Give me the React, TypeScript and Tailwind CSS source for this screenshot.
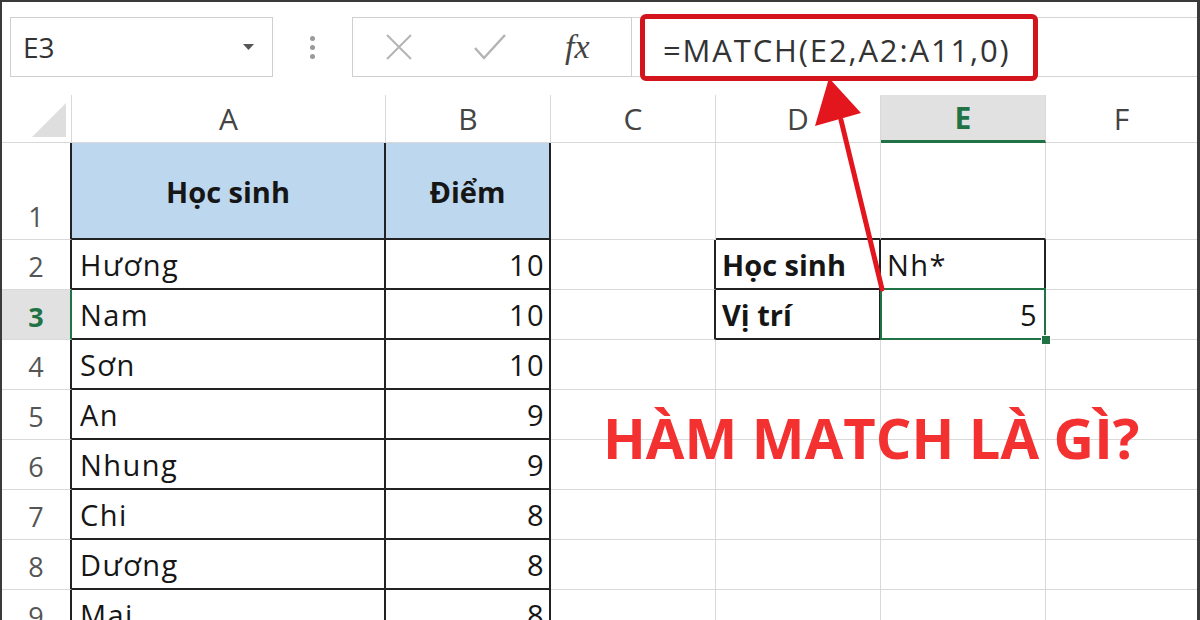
import React from "react";

type Edge = "light" | "dark" | "green" | "none";

const RIGHT: Record<Edge, string> = {
  light: "border-r border-r-[#d9d9d9]",
  dark: "border-r-2 border-r-[#222]",
  green: "border-r-2 border-r-[#217346]",
  none: "",
};
const BOTTOM: Record<Edge, string> = {
  light: "border-b border-b-[#d9d9d9]",
  dark: "border-b-2 border-b-[#222]",
  green: "border-b-[3px] border-b-[#217346]",
  none: "",
};

const FONT = "font-['Open_Sans',sans-serif]";

const names = ["Hương", "Nam", "Sơn", "An", "Nhung", "Chi", "Dương", "Mai"];
const scores = [10, 10, 10, 9, 9, 8, 8, 8];

function Cell({
  right = "light",
  bottom = "light",
  className = "",
  children,
}: {
  right?: Edge;
  bottom?: Edge;
  className?: string;
  children?: React.ReactNode;
}) {
  return (
    <div className={`relative flex ${RIGHT[right]} ${BOTTOM[bottom]} ${className}`}>
      {children}
    </div>
  );
}

function ColHead({ label, active }: { label: string; active?: boolean }) {
  return (
    <Cell
      bottom={active ? "green" : "light"}
      className={`items-center justify-center text-[30px] leading-none ${
        active ? "bg-[#e1e1e1] font-bold text-[#217346]" : "text-[#444]"
      } ${label === "F" ? "border-r-0" : ""}`}
    >
      {label}
    </Cell>
  );
}

function RowHead({ n, active }: { n: number; active?: boolean }) {
  return (
    <Cell
      right={active ? "green" : "dark"}
      className={`items-end justify-center pb-[9px] text-[27px] leading-none ${
        active ? "bg-[#e1e1e1] font-bold text-[#217346]" : "text-[#555]"
      }`}
    >
      {n}
    </Cell>
  );
}

const txt = "text-[29px] leading-none tracking-[0.05em] text-[#161616]";

export default function App() {
  return (
    <div
      className={`relative h-[620px] w-[1200px] overflow-hidden border-l-2 border-r-[3px] border-t-2 border-[#3a3a3a] bg-white ${FONT}`}
    >
      {/* Formula bar */}
      <div className="flex h-[93px] items-start pt-[15px]">
        <div className="ml-[8px] flex h-[60px] w-[263px] items-center justify-between border border-[#cfcfcf] pl-[12px] pr-[18px] text-[28px] text-[#333]">
          <span>E3</span>
          <svg width="11" height="6" viewBox="0 0 11 6">
            <path d="M0 0h11L5.5 6z" fill="#555" />
          </svg>
        </div>
        <div className="flex h-[60px] w-[79px] flex-col items-center justify-center gap-[4px]">
          <span className="h-[5px] w-[5px] rounded-full bg-[#9a9a9a]" />
          <span className="h-[5px] w-[5px] rounded-full bg-[#9a9a9a]" />
          <span className="h-[5px] w-[5px] rounded-full bg-[#9a9a9a]" />
        </div>
        <div className="flex h-[60px] w-[280px] items-center border border-[#cfcfcf]">
          <svg width="30" height="30" viewBox="0 0 30 30" className="ml-[31px]">
            <path d="M3 3l24 24M27 3L3 27" stroke="#b4b4b4" strokeWidth="2" fill="none" />
          </svg>
          <svg width="34" height="28" viewBox="0 0 34 28" className="ml-[59px]">
            <path d="M2 15l9 10L32 2" stroke="#b4b4b4" strokeWidth="2.5" fill="none" />
          </svg>
          <span className="ml-[58px] font-['Liberation_Serif',serif] text-[34px] italic leading-none text-[#444]">
            fx
          </span>
        </div>
        <div className="flex h-[60px] flex-1 border-y border-[#d4d4d4]">
          <div className="-mt-[4px] ml-[8px] flex h-[67px] w-[398px] items-center rounded-[6px] border-[5px] border-[#d4141c] pl-[18px] pt-[6px] text-[31px] leading-none tracking-[0.06em] text-[#333]">
            =MATCH(E2,A2:A11,0)
          </div>
        </div>
      </div>

      {/* Sheet */}
      <div className="grid grid-cols-[70px_314px_165px_165px_165px_165px_151px] grid-rows-[48px_97px_repeat(8,50px)]">
        <Cell bottom="light" className="items-end justify-end pb-[5px] pr-[5px]">
          <svg width="34" height="34" viewBox="0 0 34 34">
            <path d="M34 0V34H0z" fill="#dedede" />
          </svg>
        </Cell>
        {["A", "B", "C", "D", "E", "F"].map((c) => (
          <ColHead key={c} label={c} active={c === "E"} />
        ))}

        {/* Row 1 */}
        <RowHead n={1} />
        <Cell right="dark" bottom="dark" className="items-center justify-center bg-[#bdd7ee] pt-[2px]">
          <span className="text-[29px] font-bold leading-none text-[#161616]">Học sinh</span>
        </Cell>
        <Cell right="dark" bottom="dark" className="items-center justify-center bg-[#bdd7ee] pt-[2px]">
          <span className="text-[29px] font-bold leading-none text-[#161616]">Điểm</span>
        </Cell>
        <Cell />
        <Cell bottom="dark" />
        <Cell bottom="dark" />
        <Cell className="border-r-0" />

        {names.map((name, i) => {
          const row = i + 2;
          return (
            <React.Fragment key={name}>
              <RowHead n={row} active={row === 3} />
              <Cell right="dark" bottom="dark" className={`items-end pb-[9px] pl-[8px] ${txt}`}>
                {name}
              </Cell>
              <Cell right="dark" bottom="dark" className={`items-end justify-end pb-[9px] pr-[4px] ${txt}`}>
                {scores[i]}
              </Cell>
              <Cell right={row === 2 || row === 3 ? "dark" : "light"} />
              {row === 2 && (
                <>
                  <Cell right="dark" bottom="dark" className="items-end pb-[9px] pl-[6px]">
                    <span className="text-[29px] font-bold leading-none text-[#161616]">Học sinh</span>
                  </Cell>
                  <Cell right="dark" bottom="dark" className={`items-end pb-[9px] pl-[6px] ${txt}`}>
                    Nh*
                  </Cell>
                </>
              )}
              {row === 3 && (
                <>
                  <Cell right="dark" bottom="dark" className="items-end pb-[9px] pl-[6px]">
                    <span className="text-[29px] font-bold leading-none text-[#161616]">Vị trí</span>
                  </Cell>
                  <Cell right="dark" bottom="dark" className={`items-end justify-end pb-[9px] pr-[6px] ${txt}`}>
                    5
                    <div className="pointer-events-none absolute -left-px -top-[2px] bottom-[-2px] right-[-2px] border-2 border-[#217346]" />
                    <div className="absolute -bottom-[7px] -right-[7px] z-10 h-[10px] w-[10px] border border-white bg-[#217346]" />
                  </Cell>
                </>
              )}
              {row !== 2 && row !== 3 && (
                <>
                  <Cell />
                  <Cell />
                </>
              )}
              <Cell className="border-r-0" />
            </React.Fragment>
          );
        })}
      </div>

      {/* Arrow annotation */}
      <svg
        className="pointer-events-none absolute left-0 top-0"
        width="1200"
        height="620"
        viewBox="0 0 1200 620"
      >
        <path d="M880 287L839 118" stroke="#e3151d" strokeWidth="5" strokeLinecap="round" />
        <path d="M827 76L813 124L859 111z" fill="#e3151d" />
      </svg>

      {/* Title */}
      <div className="absolute left-[601px] top-[407px] text-[56px] font-bold leading-none text-[#f33131]">
        HÀM MATCH LÀ GÌ?
      </div>
    </div>
  );
}
